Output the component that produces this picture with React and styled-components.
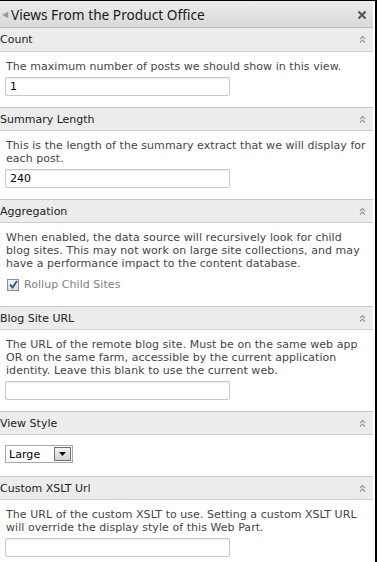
import React from "react";
import styled, { createGlobalStyle } from "styled-components";

const Global = createGlobalStyle`
  html, body { margin: 0; padding: 0; background: #fff; }
  body { font-family: "DejaVu Sans", Verdana, sans-serif; }
  * { box-sizing: border-box; }
`;

const Frame = styled.div`
  width: 377px;
  height: 562px;
  overflow: hidden;
  border-top: 1px solid #000;
  border-right: 2px solid #000;
  padding-right: 2px;
  background: #fff;
`;

const TitleBar = styled.div`
  height: 27px;
  display: flex;
  align-items: center;
  padding: 1px 6px 0 2px;
  background: linear-gradient(#ececec, #d9d9d9);
  border-bottom: 1px solid #bdbdbd;
`;

const Caret = styled.span`
  color: #9a9a9a;
  font-size: 8px;
  width: 8px;
  margin-right: 1px;
`;

const Title = styled.div`
  flex: 1;
  font-family: "Noto Sans", "Open Sans", sans-serif;
  font-size: 13.7px;
  color: #1a1a1a;
`;

const Close = styled.span`
  display: flex;
  width: 10px;
  height: 10px;
`;

const Header = styled.div`
  height: 24px;
  display: flex;
  align-items: center;
  justify-content: space-between;
  padding: 0 6px 0 0;
  background: #ececec;
  border-top: ${(p) => (p.$first ? "0" : "1px solid #c9c9c9")};
  border-bottom: 1px solid #d0d0d0;
  font-size: 11px;
  color: #222;
`;

const Body = styled.div`
  padding: 8px 5px ${(p) => (p.$extra ? "13px" : "11px")} 6px;
  font-size: 11px;
  line-height: 13px;
  letter-spacing: 0.05px;
  color: #454545;
`;

const Desc = styled.div``;

const TextBox = styled.div`
  margin-top: 4px;
  margin-left: -1px;
  width: 225px;
  height: 19px;
  border: 1px solid #c8c8c8;
  border-radius: 2px;
  box-shadow: inset 0 1px 1px #ededed;
  padding: 0 4px;
  display: flex;
  align-items: center;
  font-size: 11px;
  color: #000;
`;

const CheckRow = styled.div`
  margin-top: 8px;
  margin-bottom: 4px;
  display: flex;
  align-items: center;
  gap: 5px;
  color: #7f7f7f;
  padding-left: 1px;
`;

const Box = styled.span`
  width: 12px;
  height: 12px;
  border: 1px solid #8e8f8f;
  background: linear-gradient(#f4f4f4, #dcdcdc);
  display: flex;
  align-items: center;
  justify-content: center;
`;

const Select = styled.div`
  margin-top: 2px;
  margin-left: -1px;
  display: flex;
  width: 68px;
  height: 18px;
  border: 1px solid #a8a8a8;
  color: #000;
`;

const SelectText = styled.div`
  flex: 1;
  padding-left: 3px;
  display: flex;
  align-items: center;
`;

const DropBtn = styled.div`
  width: 17px;
  margin: 1px;
  border: 1px solid #6f6f6f;
  background: linear-gradient(#f2f2f2, #d4d4d4);
  display: flex;
  align-items: center;
  justify-content: center;
`;

const Chevrons = () => (
  <svg width="9" height="9" viewBox="0 0 9 9">
    <path d="M2 4 L4.5 1.5 L7 4" fill="none" stroke="#999" strokeWidth="1.2" />
    <path d="M2 7.5 L4.5 5 L7 7.5" fill="none" stroke="#999" strokeWidth="1.2" />
  </svg>
);

const sections = [
  {
    title: "Count",
    desc: "The maximum number of posts we should show in this view.",
    kind: "input",
    value: "1",
  },
  {
    title: "Summary Length",
    desc: "This is the length of the summary extract that we will display for each post.",
    kind: "input",
    value: "240",
  },
  {
    title: "Aggregation",
    desc: "When enabled, the data source will recursively look for child blog sites. This may not work on large site collections, and may have a performance impact to the content database.",
    kind: "check",
    value: "Rollup Child Sites",
  },
  {
    title: "Blog Site URL",
    desc: "The URL of the remote blog site. Must be on the same web app OR on the same farm, accessible by the current application identity. Leave this blank to use the current web.",
    kind: "input",
    value: "",
  },
  { title: "View Style", kind: "select", value: "Large" },
  {
    title: "Custom XSLT Url",
    desc: "The URL of the custom XSLT to use. Setting a custom XSLT URL will override the display style of this Web Part.",
    kind: "input",
    value: "",
  },
];

function Control({ s }) {
  if (s.kind === "input") return <TextBox>{s.value}</TextBox>;
  if (s.kind === "check")
    return (
      <CheckRow>
        <Box>
          <svg width="9" height="9" viewBox="0 0 9 9">
            <path d="M1 4.5 L3.5 7.5 L8 1" fill="none" stroke="#1f4fa8" strokeWidth="1.8" />
          </svg>
        </Box>
        {s.value}
      </CheckRow>
    );
  return (
    <Select>
      <SelectText>{s.value}</SelectText>
      <DropBtn>
        <svg width="7" height="4" viewBox="0 0 7 4">
          <path d="M0 0 H7 L3.5 4 Z" fill="#111" />
        </svg>
      </DropBtn>
    </Select>
  );
}

export default function App() {
  return (
    <>
      <Global />
      <Frame>
        <TitleBar>
          <Caret>◀</Caret>
          <Title>Views From the Product Office</Title>
          <Close>
            <svg width="10" height="10" viewBox="0 0 10 10">
              <path d="M1.5 1.5 L8.5 8.5 M8.5 1.5 L1.5 8.5" stroke="#555" strokeWidth="2" />
            </svg>
          </Close>
        </TitleBar>
        {sections.map((s, i) => (
          <section key={s.title}>
            <Header $first={i === 0}>
              <span>{s.title}</span>
              <Chevrons />
            </Header>
            <Body $extra={s.kind === "select"}>
              {s.desc && <Desc>{s.desc}</Desc>}
              <Control s={s} />
            </Body>
          </section>
        ))}
      </Frame>
    </>
  );
}
